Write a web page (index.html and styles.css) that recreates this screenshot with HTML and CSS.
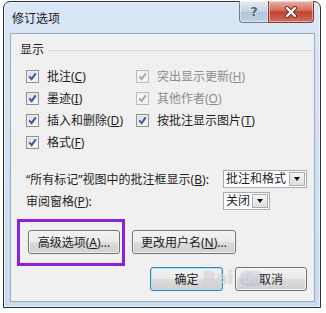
FILE: index.html
```html
<!DOCTYPE html>
<html lang="zh-CN">
<head>
    <meta charset="UTF-8">
    <title>修订选项</title>
    <link rel="stylesheet" href="styles.css">
</head>
<body>
    <div class="window">
        <div class="titlebar">
            <span class="title">修订选项</span>
            <div class="caption-buttons">
                <span class="cap-btn help">?</span>
                <span class="cap-btn close">
                    <svg width="14" height="12" viewBox="0 0 14 12">
                        <path d="M3 2 L11 10 M11 2 L3 10" stroke="#6e2b22" stroke-width="4.2" stroke-linecap="round"/>
                        <path d="M3 2 L11 10 M11 2 L3 10" stroke="#fff" stroke-width="2.4" stroke-linecap="round"/>
                    </svg>
                </span>
            </div>
        </div>

        <div class="client">
            <div class="group-head"><span>显示</span></div>

            <div class="checks">
                <label class="check"><span class="cb"><svg viewBox="0 0 11 11"><path d="M2.3 5.4 L4.6 8.2 L8.8 2.4"/></svg></span><span>批注(<u>C</u>)</span></label>
                <label class="check disabled"><span class="cb"><svg viewBox="0 0 11 11"><path d="M2.3 5.4 L4.6 8.2 L8.8 2.4"/></svg></span><span>突出显示更新(<u>H</u>)</span></label>
                <label class="check"><span class="cb"><svg viewBox="0 0 11 11"><path d="M2.3 5.4 L4.6 8.2 L8.8 2.4"/></svg></span><span>墨迹(<u>I</u>)</span></label>
                <label class="check disabled"><span class="cb"><svg viewBox="0 0 11 11"><path d="M2.3 5.4 L4.6 8.2 L8.8 2.4"/></svg></span><span>其他作者(<u>O</u>)</span></label>
                <label class="check"><span class="cb"><svg viewBox="0 0 11 11"><path d="M2.3 5.4 L4.6 8.2 L8.8 2.4"/></svg></span><span>插入和删除(<u>D</u>)</span></label>
                <label class="check"><span class="cb"><svg viewBox="0 0 11 11"><path d="M2.3 5.4 L4.6 8.2 L8.8 2.4"/></svg></span><span>按批注显示图片(<u>T</u>)</span></label>
                <label class="check"><span class="cb"><svg viewBox="0 0 11 11"><path d="M2.3 5.4 L4.6 8.2 L8.8 2.4"/></svg></span><span>格式(<u>F</u>)</span></label>
            </div>

            <div class="fields">
                <span>“所有标记”视图中的批注框显示(<u>B</u>):</span>
                <span class="combo wide"><span class="combo-text">批注和格式</span><span class="drop"></span></span>
                <span>审阅窗格(<u>P</u>):</span>
                <span class="combo narrow"><span class="combo-text">关闭</span><span class="drop"></span></span>
            </div>

            <div class="btn-row">
                <button class="btn advanced">高级选项(<u>A</u>)...</button>
                <button class="btn username">更改用户名(<u>N</u>)...</button>
            </div>

            <div class="btn-row end">
                <button class="btn ok">确定</button>
                <button class="btn cancel">取消</button>
            </div>

            <!-- annotation frame and watermark sit over the dialog -->
            <div class="highlight"></div>
            <div class="watermark"><span class="wm-bai">Bai</span><span class="wm-du">du</span></div>
        </div>
    </div>
</body>
</html>
```

FILE: styles.css
```css
body {
    margin: 0;
    background: #fff;
    font-family: "Noto Sans", "Noto Sans CJK SC", sans-serif;
    font-size: 12px;
    color: #1e1e1e;
}

.window {
    margin: 1px 0 0 3px;
    width: 316px;
    height: 305px;
    border: 1px solid #2b2f33;
    border-radius: 7px 7px 0 0;
    background: linear-gradient(#d9e7f6, #c8dbf0);
    box-shadow: inset 0 0 0 1px rgba(255, 255, 255, 0.6);
    display: flex;
    flex-direction: column;
}

.titlebar {
    height: 31px;
    display: flex;
    justify-content: space-between;
    align-items: flex-start;
    flex: none;
}

.title {
    padding: 9px 0 0 8px;
    line-height: 16px;
    color: #1a1a1a;
}

.caption-buttons {
    display: flex;
    margin: -1px 6px 0 0;
}

.cap-btn {
    height: 21px;
    display: flex;
    align-items: center;
    justify-content: center;
    border: 1px solid #6f7c8c;
    border-top: none;
    box-shadow: inset 0 0 0 1px rgba(255, 255, 255, 0.45);
}

.help {
    width: 28px;
    border-right: none;
    border-radius: 0 0 0 4px;
    background: linear-gradient(#e4ecf5, #c5d3e3 50%, #b1c3d8 51%, #bfd0e2);
    font-family: "DejaVu Sans", sans-serif;
    font-weight: bold;
    font-size: 13px;
    color: #56626e;
    text-shadow: 0 0 2px #fff;
}

.close {
    width: 44px;
    border-color: #7a3d33;
    border-radius: 0 0 4px 0;
    background: linear-gradient(#eab3a6, #d56d5b 45%, #c3402d 52%, #d0705f);
}

.client {
    flex: 1;
    margin: 0 5px 5px 6px;
    border: 1px solid #9aabbe;
    background: #f0f0f0;
    position: relative;
}

.group-head {
    display: flex;
    align-items: center;
    height: 18px;
    margin: 7px 0 0 9px;
    line-height: 18px;
}

.group-head::after {
    content: "";
    flex: 1;
    height: 1px;
    margin: 0 1px 0 4px;
    background: #d5dbe3;
}

.checks {
    display: grid;
    grid-template-columns: 110px auto;
    grid-auto-rows: 22px;
    margin: 6px 0 0 15px;
}

.check {
    display: flex;
    align-items: center;
    gap: 8px;
    white-space: nowrap;
}

.cb {
    width: 13px;
    height: 13px;
    box-sizing: border-box;
    flex: none;
    border: 1px solid #8e8f8f;
    background: linear-gradient(135deg, #d4d8de, #fbfbfb);
    box-shadow: inset 0 0 0 1px #f2f2f2;
    display: flex;
    align-items: center;
    justify-content: center;
    color: #3d5a9e;
}

.cb svg {
    width: 11px;
    height: 11px;
    fill: none;
    stroke: currentColor;
    stroke-width: 2;
}

.check.disabled {
    color: #8d8d8d;
}

.check.disabled .cb {
    border-color: #bcbcbc;
    background: #f4f4f4;
    color: #a9a9a9;
}

.fields {
    display: grid;
    grid-template-columns: 197px auto;
    grid-auto-rows: 18px;
    row-gap: 4px;
    align-items: center;
    margin: 17px 0 0 15px;
    white-space: nowrap;
}

.combo {
    justify-self: start;
    height: 18px;
    box-sizing: border-box;
    display: flex;
    border: 1px solid #a9abb1;
    background: #fff;
}

.combo.wide {
    width: 84px;
}

.combo.narrow {
    width: 47px;
}

.combo-text {
    flex: 1;
    padding-left: 2px;
    line-height: 16px;
}

.drop {
    width: 16px;
    margin: 1px;
    box-sizing: border-box;
    border: 1px solid #acacac;
    background: linear-gradient(#f6f6f6, #dedede);
    display: flex;
    align-items: center;
    justify-content: center;
}

.drop::after {
    content: "";
    border-left: 3.5px solid transparent;
    border-right: 3.5px solid transparent;
    border-top: 4px solid #111;
}

.btn-row {
    display: flex;
    gap: 12px;
    margin: 20px 0 0 17px;
}

.btn-row.end {
    justify-content: flex-end;
    margin: 13px 7px 0 0;
}

.btn {
    height: 24px;
    padding: 0;
    box-sizing: border-box;
    border: 1px solid #707070;
    border-radius: 3px;
    background: linear-gradient(#f2f2f2, #ebebeb 48%, #dddddd 52%, #cfcfcf);
    box-shadow: inset 0 0 0 1px rgba(255, 255, 255, 0.75);
    font: inherit;
    color: #1e1e1e;
    white-space: nowrap;
}

.advanced {
    width: 92px;
}

.username {
    width: 104px;
}

.ok {
    width: 73px;
    border-color: #3c7fb1;
    box-shadow: inset 0 0 0 1px #a9e4f8;
}

.cancel {
    width: 72px;
}

.highlight {
    position: absolute;
    left: 6px;
    top: 185px;
    width: 108px;
    height: 47px;
    box-sizing: border-box;
    border: 3px solid #8e1fdf;
}

.watermark {
    position: absolute;
    left: 192px;
    top: 234px;
    display: flex;
    align-items: center;
    gap: 6px;
    font-family: "DejaVu Sans", sans-serif;
    font-weight: bold;
    color: rgba(255, 255, 255, 0.55);
    text-shadow: 0 0 1px rgba(120, 120, 120, 0.5);
    pointer-events: none;
}

.wm-bai {
    font-size: 17px;
}

.wm-du {
    font-size: 13px;
    padding: 0 3px;
    border-radius: 8px;
    background: rgba(120, 140, 200, 0.18);
}
```
